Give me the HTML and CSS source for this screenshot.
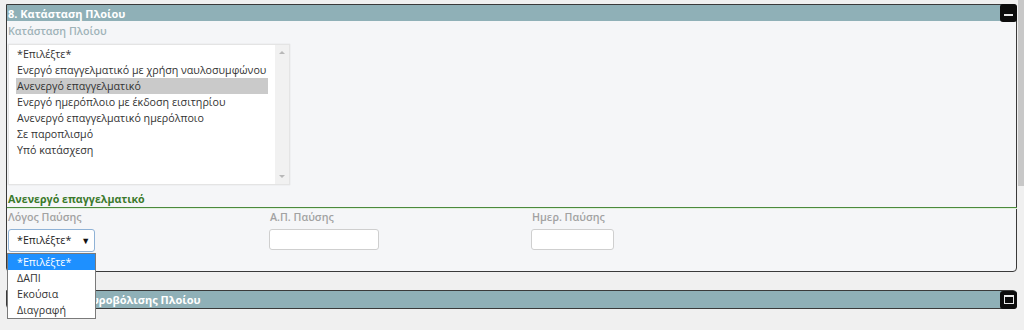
FILE: index.html
```html
<!DOCTYPE html>
<html lang="el">
<head>
  <meta charset="utf-8" />
  <title>Κατάσταση Πλοίου</title>
  <link rel="stylesheet" href="styles.css">
</head>
<body>
  <div class="page">
    <main class="content">
      <section class="panel">
        <div class="panel-head">
          <span class="panel-title">8. Κατάσταση Πλοίου</span>
          <button class="panel-btn" type="button"><span class="icon-min"></span></button>
        </div>
        <div class="panel-body">
          <div class="field-label">Κατάσταση Πλοίου</div>
          <div class="listbox">
            <ul class="list-options">
              <li>*Επιλέξτε*</li>
              <li>Ενεργό επαγγελματικό με χρήση ναυλοσυμφώνου</li>
              <li class="selected">Ανενεργό επαγγελματικό</li>
              <li>Ενεργό ημερόπλοιο με έκδοση εισιτηρίου</li>
              <li>Ανενεργό επαγγελματικό ημερόλποιο</li>
              <li>Σε παροπλισμό</li>
              <li>Υπό κατάσχεση</li>
            </ul>
            <div class="list-scroll">
              <span class="arrow-up"></span>
              <span class="arrow-down"></span>
            </div>
          </div>

          <h3 class="sub-title">Ανενεργό επαγγελματικό</h3>

          <div class="form-row">
            <div class="form-col">
              <label class="col-label">Λόγος Παύσης</label>
              <div class="select-wrap">
                <div class="select-box">*Επιλέξτε* <span class="caret">▼</span></div>
                <ul class="dropdown">
                  <li class="active">*Επιλέξτε*</li>
                  <li>ΔΑΠΙ</li>
                  <li>Εκούσια</li>
                  <li>Διαγραφή</li>
                </ul>
              </div>
            </div>
            <div class="form-col">
              <label class="col-label">Α.Π. Παύσης</label>
              <input class="text-input wide" type="text" />
            </div>
            <div class="form-col">
              <label class="col-label">Ημερ. Παύσης</label>
              <input class="text-input short" type="text" />
            </div>
          </div>
        </div>
      </section>

      <section class="panel collapsed">
        <div class="panel-head">
          <span class="panel-title">9. Στοιχεία Αγκυροβόλισης Πλοίου</span>
          <button class="panel-btn" type="button"><span class="icon-max"></span></button>
        </div>
      </section>
    </main>
    <div class="page-scroll"><div class="page-thumb"></div></div>
  </div>
</body>
</html>
```

FILE: styles.css
```css
body {
  margin: 0;
  padding: 0;
  background: #f0f0f0;
  font-family: "Open Sans", "Noto Sans", sans-serif;
  font-size: 10.7px;
  color: #333;
}
ul {
  list-style: none;
  margin: 0;
  padding: 0;
}
.page {
  display: flex;
  height: 330px;
  overflow: hidden;
}
.content {
  flex: 1;
  padding: 4px 1px 0 6px;
}
.page-scroll {
  width: 6px;
  background: #f0f0f0;
}
.page-thumb {
  height: 186px;
  background: #c8c8c8;
}

/* painel */
.panel {
  border: 1px solid #3a3a3a;
  border-radius: 0 4px 4px 4px;
  background: #f5f6f8;
  margin-bottom: 18px;
}
.panel-head {
  display: flex;
  align-items: center;
  justify-content: space-between;
  height: 16px;
  background: #8fb0b7;
}
.panel-title {
  color: #fff;
  font-weight: 700;
  font-size: 11px;
  padding-left: 1px;
}
.panel-btn {
  width: 17px;
  height: 18px;
  margin: -1px -1px -1px 0;
  padding: 0;
  border: none;
  border-radius: 3px;
  background: #0c0c0c;
  display: flex;
  align-items: center;
  justify-content: center;
}
.icon-min {
  width: 9px;
  height: 2px;
  margin-top: 4px;
  background: #e8e8e8;
}
.icon-max {
  width: 8px;
  height: 6px;
  border: 1px solid #e8e8e8;
  border-top-width: 2px;
}
.panel-body {
  padding: 2px 0 0 1px;
}
.field-label {
  color: #9fb3b8;
  font-weight: 600;
  height: 16px;
  line-height: 16px;
  margin-bottom: 5px;
}

/* lista */
.listbox {
  display: flex;
  width: 282px;
  height: 141px;
  background: #fff;
  border: 1px solid #e4e4e4;
  box-shadow: 0 0 1px rgba(0,0,0,0.15);
  box-sizing: border-box;
}
.list-options {
  flex: 1;
  padding: 1px 7px 0 7px;
}
.list-options li {
  height: 16px;
  line-height: 16px;
  padding-left: 1px;
  white-space: nowrap;
}
.list-options li.selected {
  background: #cacaca;
}
.list-scroll {
  width: 14px;
  background: #f1f1f1;
  display: flex;
  flex-direction: column;
  justify-content: space-between;
  align-items: center;
  padding: 6px 0;
}
.arrow-up, .arrow-down {
  width: 0;
  height: 0;
  border-left: 3px solid transparent;
  border-right: 3px solid transparent;
}
.arrow-up {
  border-bottom: 3px solid #b8b8b8;
}
.arrow-down {
  border-top: 3px solid #b8b8b8;
}

.sub-title {
  margin: 6px -1px 0 -1px;
  padding-left: 1px;
  height: 16px;
  line-height: 16px;
  color: #3b7a2c;
  font-size: 10.7px;
  font-weight: 700;
  border-bottom: 1px solid #4b8a3c;
  box-shadow: 0 1px 0 #dff0dc;
}

/* formulário */
.form-row {
  display: flex;
  padding-top: 1px;
  height: 62px;
}
.form-col {
  width: 262px;
  display: flex;
  flex-direction: column;
  align-items: flex-start;
}
.col-label {
  color: #a2a2a2;
  font-weight: 600;
  height: 16px;
  line-height: 16px;
  margin-bottom: 4px;
}
.select-wrap {
  position: relative;
}
.select-box {
  width: 87px;
  height: 23px;
  box-sizing: border-box;
  border: 1px solid #8fb2d6;
  border-radius: 3px;
  background: #fff;
  line-height: 21px;
  padding-left: 8px;
  color: #222;
}
.caret {
  font-size: 9px;
  margin-left: 7px;
  color: #111;
}
.dropdown {
  position: absolute;
  top: 24px;
  left: -1px;
  width: 89px;
  background: #fff;
  border: 1px solid #7a7a7a;
  box-sizing: border-box;
  z-index: 5;
}
.dropdown li {
  height: 16px;
  line-height: 16px;
  padding-left: 9px;
}
.dropdown li.active {
  background: #1e90ff;
  color: #fff;
}
.text-input {
  height: 21px;
  box-sizing: border-box;
  border: 1px solid #cfcfcf;
  border-radius: 3px;
  background: #fff;
  margin-left: -1px;
}
.text-input.wide {
  width: 110px;
}
.text-input.short {
  width: 83px;
}
.panel.collapsed .panel-head {
  height: 17px;
}
```
